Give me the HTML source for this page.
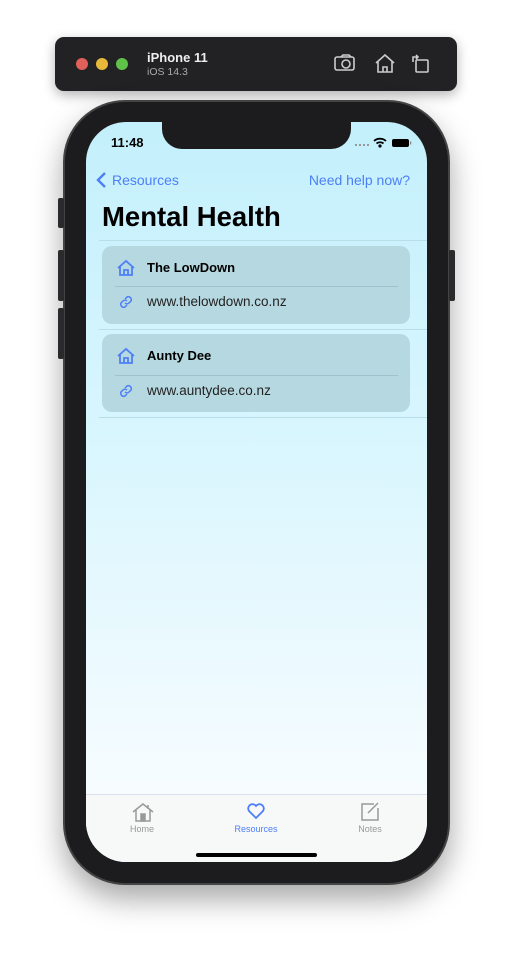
<!DOCTYPE html>
<html><head><style>
*{margin:0;padding:0;box-sizing:border-box}
body{width:513px;height:958px;background:#fff;position:relative;overflow:hidden;font-family:"Liberation Sans",sans-serif}
.abs{position:absolute}
.bar{left:55px;top:37px;width:402px;height:54px;background:#222224;border-radius:9px;box-shadow:0 4px 12px rgba(0,0,0,.3)}
.dot{width:12px;height:12px;border-radius:50%;top:58px}
.phone{left:63px;top:100px;width:387px;height:785px;background:#1c1c1e;border-radius:62px;border:2px solid #444;box-shadow:0 14px 30px rgba(0,0,0,.35)}
.btn{background:#2a2a2c;border-radius:2px;width:6px}
.screen{left:86px;top:122px;width:341px;height:740px;border-radius:40px;overflow:hidden;background:linear-gradient(#c3f0fc 0%,#daf6fe 45%,#f6fcff 90%)}
.notch{left:76px;top:0;width:189px;height:27px;background:#1c1c1e;border-radius:0 0 20px 20px}
.blue{color:#4d7ff8}
.card{left:16px;width:308px;height:78px;background:#b6d8e0;border-radius:10px}
.sep{left:13px;right:0;height:1px;background:#b8dfe8}
.tab{left:0;top:672px;width:341px;height:68px;background:#f7f8f8;border-top:1px solid #dde}
.tl{font-size:9px;color:#999;position:absolute;top:29px;text-align:center;width:80px}
</style></head><body>
<div class="abs bar"></div>
<div class="abs dot" style="left:76px;background:#e0605a"></div>
<div class="abs dot" style="left:96px;background:#e8b83a"></div>
<div class="abs dot" style="left:116px;background:#5fc14a"></div>
<div class="abs" style="left:147px;top:50px;color:#eee;font-weight:bold;font-size:13px">iPhone 11</div>
<div class="abs" style="left:147px;top:66px;color:#aaa;font-size:10.5px">iOS 14.3</div>
<svg class="abs" style="left:333px;top:52px" width="100" height="24" fill="none" stroke="#ccc" stroke-width="1.6">
<rect x="2" y="5" width="19" height="13" rx="2"/><circle cx="13" cy="12" r="4"/><path d="M8 5l2-2h6l2 2"/>
<path d="M43 11l9-8 9 8M45 9v11h14V9M50 20v-5h4v5"/>
<rect x="83" y="8" width="12" height="12" rx="1"/><path d="M80 10V5h5M83 3l2 2-2 2"/>
</svg>
<div class="abs phone"></div>
<div class="abs btn" style="left:58px;top:198px;height:30px"></div>
<div class="abs btn" style="left:58px;top:250px;height:51px"></div>
<div class="abs btn" style="left:58px;top:308px;height:51px"></div>
<div class="abs btn" style="left:449px;top:250px;height:51px"></div>
<div class="abs screen">
<div class="abs notch"></div>
<div class="abs" style="left:25px;top:13px;font-size:13px;font-weight:bold">11:48</div>
<div class="abs" style="left:269px;top:22px;width:14px;border-top:2px dotted #999"></div>
<svg class="abs" style="left:287px;top:15px" width="40" height="12"><path d="M1 4a9 9 0 0 1 12 0M3.5 6.5a5.5 5.5 0 0 1 7 0" stroke="#000" stroke-width="1.8" fill="none"/><circle cx="7" cy="9" r="1.6"/><rect x="19" y="2" width="17" height="8" rx="2" fill="#000"/><rect x="37" y="4.5" width="1.3" height="3" fill="#888"/></svg>
<svg class="abs" style="left:10px;top:49px" width="12" height="18"><path d="M9 2L2 9l7 7" stroke="#4d7ff8" stroke-width="2.4" fill="none"/></svg>
<div class="abs blue" style="left:26px;top:50px;font-size:14px">Resources</div>
<div class="abs blue" style="right:17px;top:50px;font-size:14px">Need help now?</div>
<div class="abs" style="left:16px;top:79px;font-size:27.5px;font-weight:bold">Mental Health</div>
<div class="abs sep" style="top:118px"></div>
<div class="abs card" style="top:124px"></div>
<div class="abs sep" style="top:207px"></div>
<div class="abs card" style="top:212px"></div>
<div class="abs sep" style="top:295px"></div>
<div class="abs" style="left:29px;top:164px;width:283px;height:1px;background:#9fc3cc"></div>
<div class="abs" style="left:29px;top:253px;width:283px;height:1px;background:#9fc3cc"></div>
<svg class="abs" style="left:31px;top:137px" width="18" height="18" fill="none" stroke="#4d7ff8" stroke-width="1.8"><path d="M1 9l8-7 8 7M3 7v9h12V7M7 16v-5h4v5"/></svg>
<svg class="abs" style="left:31px;top:225px" width="18" height="18" fill="none" stroke="#4d7ff8" stroke-width="1.8"><path d="M1 9l8-7 8 7M3 7v9h12V7M7 16v-5h4v5"/></svg>
<svg class="abs" style="left:32px;top:172px" width="16" height="16" fill="none" stroke="#4d7ff8" stroke-width="1.5"><path d="M7 5l2-2a3 3 0 0 1 4 4l-2 2a3 3 0 0 1-4 0M9 11l-2 2a3 3 0 0 1-4-4l2-2a3 3 0 0 1 4 0"/></svg>
<svg class="abs" style="left:32px;top:261px" width="16" height="16" fill="none" stroke="#4d7ff8" stroke-width="1.5"><path d="M7 5l2-2a3 3 0 0 1 4 4l-2 2a3 3 0 0 1-4 0M9 11l-2 2a3 3 0 0 1-4-4l2-2a3 3 0 0 1 4 0"/></svg>
<div class="abs" style="left:61px;top:138px;font-size:13px;font-weight:bold">The LowDown</div>
<div class="abs" style="left:61px;top:172px;font-size:13.5px;color:#222">www.thelowdown.co.nz</div>
<div class="abs" style="left:61px;top:226px;font-size:13px;font-weight:bold">Aunty Dee</div>
<div class="abs" style="left:61px;top:261px;font-size:13.5px;color:#222">www.auntydee.co.nz</div>
<div class="abs tab">
<svg class="abs" style="left:46px;top:7px" width="22" height="20" fill="none" stroke="#999" stroke-width="1.5"><path d="M1 10l10-8 10 8M4 8v11h14V8M16 3v4"/><rect x="9" y="12" width="4" height="7" fill="#999"/></svg>
<div class="tl" style="left:16px">Home</div>
<svg class="abs" style="left:160px;top:7px" width="20" height="18" fill="none" stroke="#4d7ff8" stroke-width="1.8"><path d="M10 16L3 9a4 4 0 0 1 7-5a4 4 0 0 1 7 5z"/></svg>
<div class="tl" style="left:130px;color:#4d7ff8">Resources</div>
<svg class="abs" style="left:274px;top:6px" width="20" height="20" fill="none" stroke="#999" stroke-width="1.5"><path d="M14 3H2v16h16V7M8 12l10-10"/></svg>
<div class="tl" style="left:244px">Notes</div>
<div class="abs" style="left:110px;top:58px;width:121px;height:4px;border-radius:2px;background:#000"></div>
</div>
</div>
</body></html>
